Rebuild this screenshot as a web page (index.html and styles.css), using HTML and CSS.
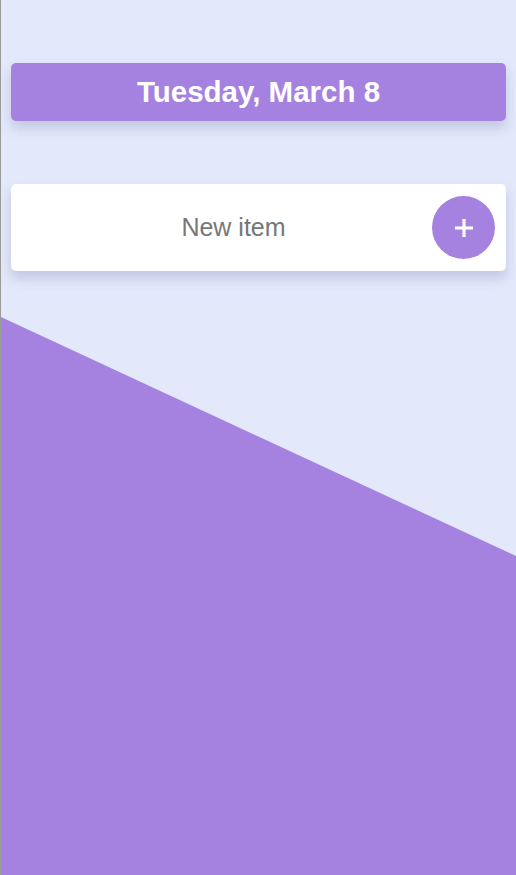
FILE: index.html
```html
<!DOCTYPE html>
<html lang="en">
<head>
<meta charset="utf-8">
<title>Todo</title>
<link rel="stylesheet" href="styles.css">
</head>
<body>
<div class="app">
  <header class="date-bar">Tuesday, March 8</header>
  <form class="new-item">
    <input class="new-input" type="text" placeholder="New item">
    <button class="add-btn" type="button" aria-label="Add">
      <svg class="plus" width="20" height="20" viewBox="0 0 20 20"><path d="M10 1V19M1 10H19" stroke="#fff" stroke-width="3.2" fill="none"/></svg>
    </button>
  </form>
</div>
</body>
</html>
```
FILE: styles.css
```css
html, body {
  margin: 0;
  padding: 0;
  height: 100%;
}
body {
  background: #e3e8fb;
  font-family: "Liberation Sans", Arial, sans-serif;
  border-left: 1px solid #9a9a9a;
  box-sizing: border-box;
  position: relative;
  overflow: hidden;
}
body::before {
  content: "";
  position: fixed;
  top: 0;
  bottom: 0;
  right: 0;
  left: 1px;
  background: #a682e0;
  clip-path: polygon(0 317px, 100% 556px, 100% 100%, 0 100%);
  z-index: 0;
}
.app {
  position: relative;
  z-index: 1;
  padding: 63px 10px 0 10px;
  display: flex;
  flex-direction: column;
  gap: 63px;
}
.date-bar {
  height: 58px;
  background: #a682e0;
  border-radius: 5px;
  color: #fff;
  font-weight: bold;
  font-size: 29.5px;
  display: flex;
  align-items: center;
  justify-content: center;
  box-shadow: 0 7px 12px rgba(110, 110, 160, 0.28);
}
.new-item {
  margin: 0;
  height: 87px;
  background: #fff;
  border-radius: 5px;
  display: flex;
  align-items: center;
  padding: 0 11px 0 24px;
  box-shadow: 0 7px 12px rgba(110, 110, 160, 0.28);
}
.new-input {
  flex: 1;
  min-width: 0;
  border: none;
  outline: none;
  background: transparent;
  text-align: center;
  font-family: "Liberation Sans", Arial, sans-serif;
  font-size: 25px;
  color: #777;
  padding: 0;
}
.new-input::placeholder {
  color: #777;
}
.add-btn {
  width: 63px;
  height: 63px;
  border-radius: 50%;
  border: none;
  background: #a682e0;
  padding: 0;
  display: flex;
  align-items: center;
  justify-content: center;
}
.plus {
  display: block;
}
```
